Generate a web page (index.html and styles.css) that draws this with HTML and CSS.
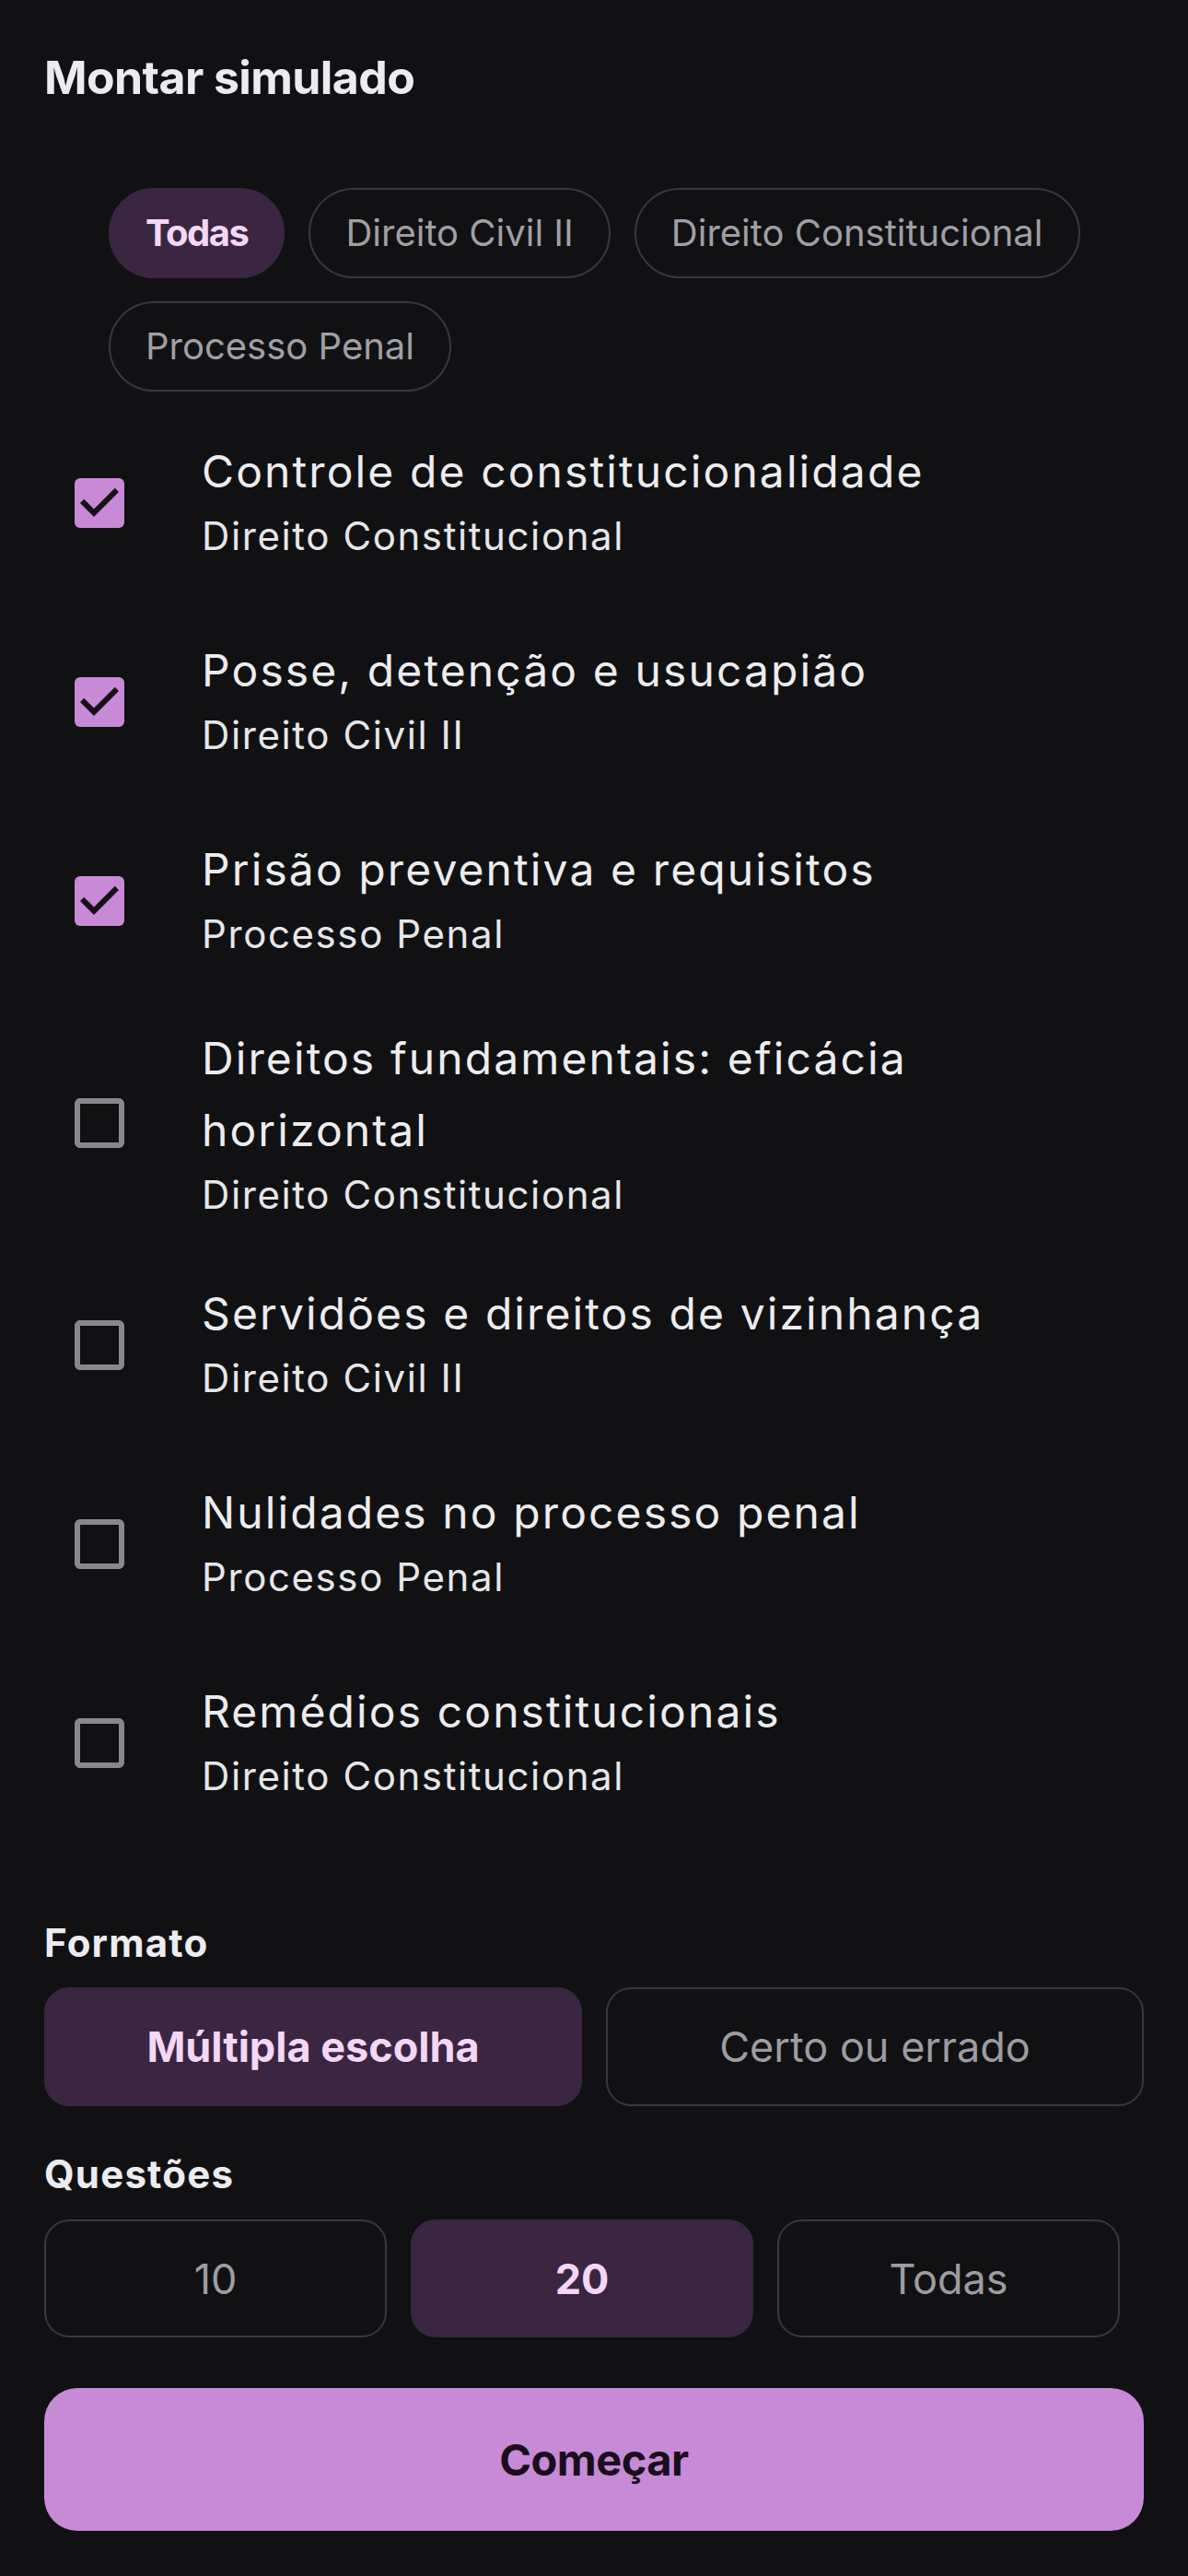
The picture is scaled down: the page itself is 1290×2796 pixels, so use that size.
FILE: index.html
```html
<!DOCTYPE html>
<html lang="pt-BR">
<head>
<meta charset="utf-8">
<title>Montar simulado</title>
<link rel="stylesheet" href="styles.css">
</head>
<body>
<main class="page">
  <h1 class="title">Montar simulado</h1>

  <div class="chips">
    <button class="chip chip--active">Todas</button>
    <button class="chip">Direito Civil II</button>
    <button class="chip">Direito Constitucional</button>
    <button class="chip">Processo Penal</button>
  </div>

  <ul class="topics">
    <li class="topic">
      <svg class="check" viewBox="0 0 24 24"><rect x="3" y="3" width="18" height="18" rx="2" class="check-box"/><path class="check-mark" d="M10 17l-5-5 1.41-1.41L10 14.17l7.59-7.59L19 8l-9 9z"/></svg>
      <div class="topic-text"><div class="topic-title">Controle de constitucionalidade</div><div class="topic-sub">Direito Constitucional</div></div>
    </li>
    <li class="topic">
      <svg class="check" viewBox="0 0 24 24"><rect x="3" y="3" width="18" height="18" rx="2" class="check-box"/><path class="check-mark" d="M10 17l-5-5 1.41-1.41L10 14.17l7.59-7.59L19 8l-9 9z"/></svg>
      <div class="topic-text"><div class="topic-title">Posse, detenção e usucapião</div><div class="topic-sub">Direito Civil II</div></div>
    </li>
    <li class="topic">
      <svg class="check" viewBox="0 0 24 24"><rect x="3" y="3" width="18" height="18" rx="2" class="check-box"/><path class="check-mark" d="M10 17l-5-5 1.41-1.41L10 14.17l7.59-7.59L19 8l-9 9z"/></svg>
      <div class="topic-text"><div class="topic-title">Prisão preventiva e requisitos</div><div class="topic-sub">Processo Penal</div></div>
    </li>
    <li class="topic">
      <svg class="check" viewBox="0 0 24 24"><path class="check-empty" d="M19 5v14H5V5h14m0-2H5c-1.1 0-2 .9-2 2v14c0 1.1.9 2 2 2h14c1.1 0 2-.9 2-2V5c0-1.1-.9-2-2-2z"/></svg>
      <div class="topic-text"><div class="topic-title">Direitos fundamentais: eficácia horizontal</div><div class="topic-sub">Direito Constitucional</div></div>
    </li>
    <li class="topic">
      <svg class="check" viewBox="0 0 24 24"><path class="check-empty" d="M19 5v14H5V5h14m0-2H5c-1.1 0-2 .9-2 2v14c0 1.1.9 2 2 2h14c1.1 0 2-.9 2-2V5c0-1.1-.9-2-2-2z"/></svg>
      <div class="topic-text"><div class="topic-title">Servidões e direitos de vizinhança</div><div class="topic-sub">Direito Civil II</div></div>
    </li>
    <li class="topic">
      <svg class="check" viewBox="0 0 24 24"><path class="check-empty" d="M19 5v14H5V5h14m0-2H5c-1.1 0-2 .9-2 2v14c0 1.1.9 2 2 2h14c1.1 0 2-.9 2-2V5c0-1.1-.9-2-2-2z"/></svg>
      <div class="topic-text"><div class="topic-title">Nulidades no processo penal</div><div class="topic-sub">Processo Penal</div></div>
    </li>
    <li class="topic">
      <svg class="check" viewBox="0 0 24 24"><path class="check-empty" d="M19 5v14H5V5h14m0-2H5c-1.1 0-2 .9-2 2v14c0 1.1.9 2 2 2h14c1.1 0 2-.9 2-2V5c0-1.1-.9-2-2-2z"/></svg>
      <div class="topic-text"><div class="topic-title">Remédios constitucionais</div><div class="topic-sub">Direito Constitucional</div></div>
    </li>
  </ul>

  <section class="group group--format">
    <h2 class="label">Formato</h2>
    <div class="seg">
      <button class="opt opt--wide opt--active">Múltipla escolha</button>
      <button class="opt opt--wide">Certo ou errado</button>
    </div>
  </section>

  <section class="group group--count">
    <h2 class="label">Questões</h2>
    <div class="seg seg--count">
      <button class="opt opt--narrow">10</button>
      <button class="opt opt--narrow opt--active">20</button>
      <button class="opt opt--narrow">Todas</button>
    </div>
  </section>

  <button class="start">Começar</button>
</main>
</body>
</html>
```

FILE: styles.css
```css
html, body {
  margin: 0;
  padding: 0;
  background: #111113;
}

body {
  font-family: Inter, "Noto Sans", sans-serif;
  color: #ececf0;
}

.page {
  box-sizing: border-box;
  width: 1290px;
  padding: 48px 48px 48px;
}

.title {
  margin: 0;
  font-size: 50px;
  line-height: 72px;
  font-weight: 700;
  letter-spacing: -0.6px;
  color: #ececf0;
}

/* filter chips */
.chips {
  display: flex;
  flex-wrap: wrap;
  gap: 25px 26px;
  margin: 84px 0 0 70px;
}

.chip {
  box-sizing: border-box;
  height: 98px;
  padding: 0 38px;
  border: 2px solid #38383c;
  border-radius: 49px;
  background: transparent;
  color: #a09fa6;
  font-family: inherit;
  font-size: 40px;
  font-weight: 400;
  line-height: 1;
  display: flex;
  align-items: center;
}

.chip--active {
  background: #3a2640;
  border-color: #3a2640;
  color: #f3d8f6;
  font-weight: 700;
  letter-spacing: -1.5px;
}

/* topic list */
.topics {
  list-style: none;
  margin: 13px 0 0;
  padding: 0;
}

.topic {
  box-sizing: border-box;
  display: flex;
  align-items: center;
  gap: 75px;
  min-height: 216px;
  padding: 24px 48px 24px 24px;
}

.check {
  display: block;
  flex: none;
  width: 72px;
  height: 72px;
}

.check-box {
  fill: #c88ad6;
}

.check-mark {
  fill: #171118;
}

.check-empty {
  fill: #88878d;
}

.topic-text {
  flex: 1;
  min-height: 147px;
}

.topic-title {
  font-size: 48px;
  line-height: 78px;
  letter-spacing: 2.1px;
  color: #ececf0;
}

.topic-sub {
  font-size: 42px;
  line-height: 62px;
  letter-spacing: 1.6px;
  color: #e6e6ea;
}

/* option groups */
.group--format {
  margin-top: 79px;
}

.group--count {
  margin-top: 44px;
}

.label {
  margin: 0;
  font-size: 42px;
  line-height: 60px;
  font-weight: 700;
  letter-spacing: 1.2px;
  color: #ececf0;
}

.seg {
  display: flex;
  gap: 26px;
  margin-top: 18px;
}

.seg--count {
  margin-top: 19px;
}

.opt {
  box-sizing: border-box;
  height: 129px;
  border: 2px solid #38383c;
  border-radius: 27px;
  background: transparent;
  color: #9d9ca3;
  font-family: inherit;
  font-size: 45px;
  font-weight: 400;
  padding: 0;
}

.opt--wide {
  width: 584px;
}

.opt--narrow {
  width: 372px;
  height: 128px;
}

.opt--active {
  background: #3a2640;
  border-color: #3a2640;
  color: #f3d8f6;
  font-weight: 700;
}

.start {
  display: block;
  box-sizing: border-box;
  width: 100%;
  height: 155px;
  margin-top: 55px;
  border: 0;
  border-radius: 36px;
  background: #c78ad6;
  color: #1a0e1d;
  font-family: inherit;
  font-size: 47px;
  font-weight: 700;
  letter-spacing: -0.5px;
}
```
